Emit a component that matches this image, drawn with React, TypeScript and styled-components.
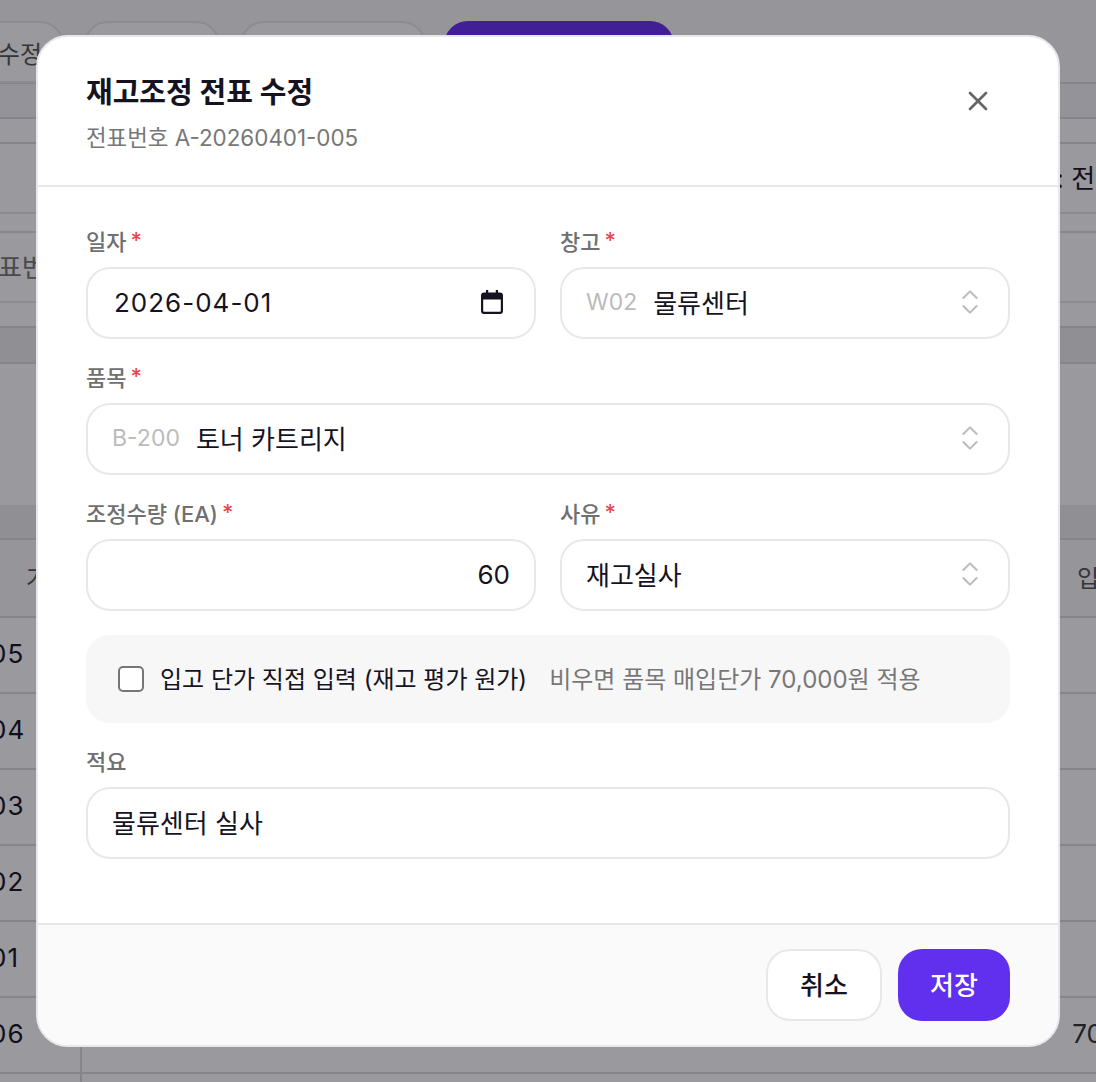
import React from "react";
import styled, { createGlobalStyle } from "styled-components";
import { ChevronsUpDown, X } from "lucide-react";

const FONT = `Inter, "Noto Sans CJK KR", "Noto Sans", sans-serif`;

const GlobalStyle = createGlobalStyle`
  html, body {
    margin: 0;
    padding: 0;
    background: #fff;
  }
  body {
    font-family: ${FONT};
    color: #15131f;
  }
  * {
    box-sizing: border-box;
  }
`;

const rows = ["05", "04", "03", "02", "01", "06"];

const App = () => {
  return (
    <Page>
      <GlobalStyle />
      <Behind>
        <Toolbar>
          <ToolButton $w={100}>수정</ToolButton>
          <ToolButton $w={136} />
          <ToolButton $w={186} />
          <PrimaryTool />
        </Toolbar>
        <Band $h={35} $tone="#f4f4f6" />
        <Strip $h={25} />
        <InfoRow>
          <span />
          <InfoText>: 전표</InfoText>
        </InfoRow>
        <Strip $h={19} />
        <InfoRow>
          <InfoText $left>전표번</InfoText>
        </InfoRow>
        <Strip $h={25} />
        <Band $h={36} $tone="#ececee" />
        <Blank />
        <Band $h={35} $tone="#ececee" />
        <HeadRow>
          <HeadText>가</HeadText>
          <HeadText>입</HeadText>
        </HeadRow>
        {rows.map((code, i) => (
          <DataRow key={code}>
            <Code $divider={i === rows.length - 1}>{code}</Code>
            {i === rows.length - 1 && <Amount>70</Amount>}
          </DataRow>
        ))}
        <DataRow>
          <Code $divider />
        </DataRow>
      </Behind>

      <Overlay>
        <Modal>
          <ModalHead>
            <div>
              <Title>재고조정 전표 수정</Title>
              <Sub>전표번호 A-20260401-005</Sub>
            </div>
            <CloseButton aria-label="닫기">
              <X size={32} strokeWidth={2} />
            </CloseButton>
          </ModalHead>

          <ModalBody>
            <TwoCols>
              <Field>
                <Label>
                  일자<Req>*</Req>
                </Label>
                <DateBox>
                  <DateText>2026-04-01</DateText>
                  <CalendarIcon viewBox="0 0 22 24" width="22" height="24">
                    <path
                      fillRule="evenodd"
                      d="M5 0h2.2v2.4h7.6V0H17v2.4h2a3 3 0 0 1 3 3V21a3 3 0 0 1-3 3H3a3 3 0 0 1-3-3V5.400a3 3 0 0 1 3-3h2V0zM2.200 9.600V21a.8.800 0 0 0 .8.800h16a.8.800 0 0 0 .8-.8V9.600H2.200z"
                    />
                  </CalendarIcon>
                </DateBox>
              </Field>
              <Field>
                <Label>
                  창고<Req>*</Req>
                </Label>
                <SelectBox>
                  <CodeText>W02</CodeText>
                  <ValueText>물류센터</ValueText>
                  <Updown size={32} strokeWidth={1.5} />
                </SelectBox>
              </Field>
            </TwoCols>

            <Field>
              <Label>
                품목<Req>*</Req>
              </Label>
              <SelectBox>
                <CodeText>B-200</CodeText>
                <ValueText>토너 카트리지</ValueText>
                <Updown size={32} strokeWidth={1.5} />
              </SelectBox>
            </Field>

            <TwoCols>
              <Field>
                <Label>
                  조정수량 (EA)<Req>*</Req>
                </Label>
                <NumberBox>60</NumberBox>
              </Field>
              <Field>
                <Label>
                  사유<Req>*</Req>
                </Label>
                <SelectBox>
                  <ValueText>재고실사</ValueText>
                  <Updown size={32} strokeWidth={1.5} />
                </SelectBox>
              </Field>
            </TwoCols>

            <CheckPanel>
              <CheckBox />
              <CheckLabel>입고 단가 직접 입력 (재고 평가 원가)</CheckLabel>
              <CheckHint>비우면 품목 매입단가 70,000원 적용</CheckHint>
            </CheckPanel>

            <Field>
              <Label>적요</Label>
              <TextBox>물류센터 실사</TextBox>
            </Field>
          </ModalBody>

          <ModalFoot>
            <CancelButton>취소</CancelButton>
            <SaveButton>저장</SaveButton>
          </ModalFoot>
        </Modal>
      </Overlay>
    </Page>
  );
};

export default App;

const Page = styled.div`
  position: relative;
  width: 1096px;
  height: 1082px;
  overflow: hidden;
  background: #fff;
`;

const Behind = styled.div`
  display: flex;
  flex-direction: column;
  height: 100%;
`;

const Toolbar = styled.div`
  display: flex;
  align-items: flex-start;
  flex: none;
  gap: 20px;
  height: 84px;
  padding: 21px 0 0;
  margin-left: -36px;
  background: #f7f7f9;
  border-bottom: 2px solid #ddd;
`;

const ToolButton = styled.div<{ $w: number }>`
  display: flex;
  align-items: center;
  justify-content: flex-end;
  width: ${(p) => p.$w}px;
  height: 62px;
  padding-right: 20px;
  border: 2px solid #e6e6e8;
  border-radius: 24px;
  background: #fff;
  font-size: 24px;
  color: #555;
  white-space: nowrap;
`;

const PrimaryTool = styled.div`
  width: 230px;
  height: 62px;
  margin-left: -2px;
  border-radius: 24px;
  background: #6830f0;
`;

const Band = styled.div<{ $h: number; $tone: string }>`
  flex: none;
  height: ${(p) => p.$h}px;
  background: ${(p) => p.$tone};
  border-bottom: 2px solid #ddd;
`;

const Strip = styled.div<{ $h: number }>`
  flex: none;
  height: ${(p) => p.$h}px;
  border-bottom: 2px solid #ddd;
`;

const InfoRow = styled.div`
  display: flex;
  align-items: center;
  justify-content: space-between;
  flex: none;
  height: 70px;
  padding-bottom: 4px;
  border-bottom: 2px solid #e6e6e8;
`;

const InfoText = styled.span<{ $left?: boolean }>`
  font-size: 26px;
  white-space: nowrap;
  color: ${(p) => (p.$left ? "#777" : "#15131f")};
  margin: ${(p) => (p.$left ? "0 0 0 -26px" : "0 -23px 0 0")};
`;

const Blank = styled.div`
  flex: none;
  height: 141px;
`;

const HeadRow = styled.div`
  display: flex;
  align-items: center;
  justify-content: space-between;
  flex: none;
  height: 78px;
  padding: 0 0 4px 26px;
  background: #f8f8f9;
  border-bottom: 2px solid #ddd;
`;

const HeadText = styled.span`
  font-size: 24px;
  color: #555;
  white-space: nowrap;
  &:last-child {
    margin-right: -3px;
  }
`;

const DataRow = styled.div`
  display: flex;
  align-items: center;
  justify-content: space-between;
  height: 76px;
  flex: none;
  border-bottom: 2px solid #ddd;
`;

const Code = styled.span<{ $divider?: boolean }>`
  display: flex;
  align-items: center;
  width: 92px;
  height: 100%;
  margin-left: -10px;
  padding-bottom: 4px;
  font-size: 26px;
  letter-spacing: 1px;
  color: #15131f;
  border-right: ${(p) => (p.$divider ? "2px solid #ddd" : "none")};
`;

const Amount = styled.span`
  margin-right: -7px;
  padding-bottom: 4px;
  font-size: 26px;
  color: #333;
`;

const Overlay = styled.div`
  position: absolute;
  inset: 0;
  background: rgba(10, 10, 20, 0.41);
  display: flex;
  align-items: flex-start;
  justify-content: center;
  padding-top: 35px;
`;

const Modal = styled.div`
  display: flex;
  flex-direction: column;
  width: 1024px;
  height: 1012px;
  background: #fff;
  border: 2px solid #e8e8ea;
  border-radius: 32px;
  overflow: hidden;
`;

const ModalHead = styled.div`
  display: flex;
  align-items: flex-start;
  justify-content: space-between;
  height: 150px;
  padding: 37px 64px 0 48px;
  border-bottom: 2px solid #e8e8ea;
`;

const Title = styled.div`
  font-size: 29px;
  font-weight: 700;
  line-height: 38px;
  color: #15131f;
`;

const Sub = styled.div`
  margin-top: 10px;
  font-size: 22.4px;
  line-height: 32px;
  color: #777;
`;

const CloseButton = styled.button`
  display: flex;
  padding: 0;
  margin-top: 11px;
  border: none;
  background: none;
  color: #666;
`;

const ModalBody = styled.div`
  flex: 1;
  display: flex;
  flex-direction: column;
  gap: 24px;
  padding: 40px 48px 0;
`;

const TwoCols = styled.div`
  display: grid;
  grid-template-columns: 1fr 1fr;
  gap: 24px;
`;

const Field = styled.div`
  display: flex;
  flex-direction: column;
  gap: 12px;
`;

const Label = styled.label`
  display: flex;
  align-items: center;
  gap: 4px;
  height: 28px;
  padding-bottom: 2px;
  font-size: 22px;
  font-weight: 500;
  color: #707070;
`;

const Req = styled.span`
  color: #e5484d;
`;

const boxStyles = `
  display: flex;
  align-items: center;
  width: 100%;
  height: 72px;
  padding: 0 24px 2px;
  background: #fff;
  border: 2px solid #e8e8ea;
  border-radius: 24px;
  font-family: ${FONT};
  font-size: 26px;
  color: #15131f;
`;

const DateBox = styled.div`
  ${boxStyles}
  justify-content: space-between;
`;

const DateText = styled.span`
  margin-left: 2px;
  letter-spacing: 1px;
`;

const CalendarIcon = styled.svg`
  margin-right: 7px;
  fill: #15131f;
`;

const SelectBox = styled.div`
  ${boxStyles}
`;

const NumberBox = styled.div`
  ${boxStyles}
  justify-content: flex-end;
`;

const TextBox = styled.div`
  ${boxStyles}
  padding-bottom: 4px;
`;

const CodeText = styled.span`
  margin-right: 16px;
  font-size: 23px;
  color: #bbb;
`;

const ValueText = styled.span`
  flex: 1;
  padding-bottom: 2px;
`;

const Updown = styled(ChevronsUpDown)`
  flex: none;
  margin-right: -2px;
  color: #bbb;
`;

const CheckPanel = styled.div`
  display: flex;
  align-items: center;
  height: 88px;
  padding: 0 32px;
  background: #f7f7f8;
  border-radius: 24px;
`;

const CheckBox = styled.span`
  flex: none;
  width: 26px;
  height: 26px;
  margin-right: 16px;
  background: #fff;
  border: 2px solid #767676;
  border-radius: 5px;
`;

const CheckLabel = styled.span`
  padding-bottom: 4px;
  font-size: 24px;
  color: #15131f;
  white-space: nowrap;
`;

const CheckHint = styled.span`
  margin-left: 22px;
  padding-bottom: 4px;
  font-size: 24px;
  color: #777;
  white-space: nowrap;
`;

const ModalFoot = styled.div`
  display: flex;
  justify-content: flex-end;
  gap: 16px;
  height: 122px;
  padding: 24px 48px 0 0;
  background: #fafafa;
  border-top: 2px solid #e8e8ea;
`;

const CancelButton = styled.button`
  width: 116px;
  height: 72px;
  padding-bottom: 4px;
  background: #fff;
  border: 2px solid #e8e8ea;
  border-radius: 24px;
  font-family: ${FONT};
  font-size: 26px;
  font-weight: 500;
  color: #15131f;
`;

const SaveButton = styled.button`
  width: 112px;
  height: 72px;
  padding-bottom: 4px;
  background: #6030ee;
  border: none;
  border-radius: 24px;
  font-family: ${FONT};
  font-size: 26px;
  font-weight: 500;
  color: #fff;
`;
